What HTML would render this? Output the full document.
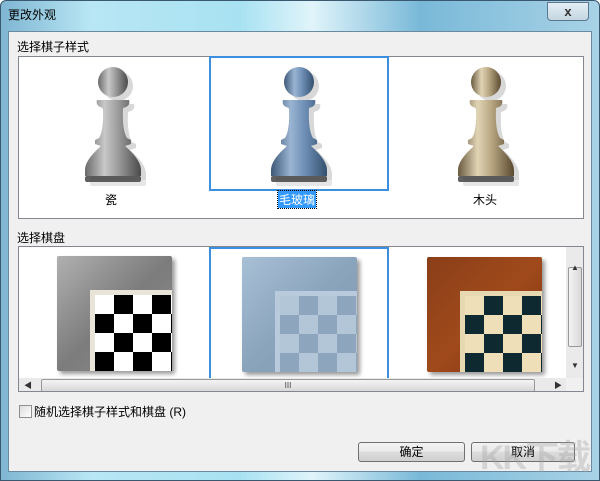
<!DOCTYPE html><html><head><meta charset="utf-8"><style>
*{margin:0;padding:0;box-sizing:border-box}
body{width:600px;height:481px;overflow:hidden;background:#fff;font-family:"Liberation Sans","Noto Sans CJK SC",sans-serif;font-size:12px;color:#000;position:relative}
.a{position:absolute}
.win{left:0;top:0;width:600px;height:481px;background:linear-gradient(90deg,#7fb6d2 0%,#b8e6f4 15%,#a8e2f2 40%,#e0f4fa 52%,#79b9d8 70%,#a8d2e6 100%);border:1px solid #3a5870;border-radius:6px 6px 0 0}
.client{left:8px;top:31px;width:584px;height:441px;background:#f0f0f0;border:1px solid #6a8aa0}
.box{background:#fff;border:1px solid #828790}
.sel{border:2px solid #3c8fe0}
.btn{border:1px solid #707070;border-radius:3px;background:linear-gradient(#f2f2f2,#ebebeb 45%,#dddddd 50%,#cfcfcf);text-align:center;line-height:18px;height:20px}
</style></head><body>
<div class="a win"></div>
<div class="a" style="left:8px;top:6px;font-size:12px">更改外观</div>
<div class="a" style="left:547px;top:2px;width:42px;height:19px;border:1px solid #5a7890;border-radius:0 0 4px 4px;background:linear-gradient(#e4eef4,#c4d6e2);text-align:center;line-height:17px;color:#333;font-weight:bold;font-size:13px">x</div>
<div class="a client"></div>
<div class="a" style="left:17px;top:38px">选择棋子样式</div>
<div class="a box" style="left:18px;top:56px;width:566px;height:163px"></div>
<div class="a sel" style="left:209px;top:56px;width:180px;height:135px"></div>
<svg class="a" style="left:0;top:0" width="600" height="481">
<defs>
<linearGradient id="gp" x1="0" x2="1"><stop offset="0" stop-color="#6a6a6a"/><stop offset=".35" stop-color="#c8c8c8"/><stop offset=".6" stop-color="#9a9a9a"/><stop offset="1" stop-color="#4a4a4a"/></linearGradient>
<linearGradient id="bp" x1="0" x2="1"><stop offset="0" stop-color="#3e5878"/><stop offset=".35" stop-color="#9ab4d2"/><stop offset=".6" stop-color="#6f8fb6"/><stop offset="1" stop-color="#34506e"/></linearGradient>
<linearGradient id="wp" x1="0" x2="1"><stop offset="0" stop-color="#6a5a40"/><stop offset=".35" stop-color="#e0d4b4"/><stop offset=".6" stop-color="#b8a682"/><stop offset="1" stop-color="#5a4a30"/></linearGradient>
<g id="pawn">
<path d="M-16,40 L16,40 Q18,46 10,48 Q9,70 14,78 L18,80 L18,84 L12,86 Q28,100 28,110 L28,116 L-28,116 L-28,110 Q-28,100 -12,86 L-18,84 L-18,80 L-14,78 Q-9,70 -10,48 Q-18,46 -16,40 Z"/>
<circle cx="0" cy="22" r="15"/>
<rect x="-28" y="116" width="56" height="6" rx="2" opacity=".85" fill="#444"/>
</g>
</defs>
<g fill="#000" opacity=".15"><use href="#pawn" x="118" y="64"/><use href="#pawn" x="304" y="64"/><use href="#pawn" x="491" y="64"/></g>
<use href="#pawn" x="113" y="60" fill="url(#gp)"/>
<use href="#pawn" x="299" y="60" fill="url(#bp)"/>
<use href="#pawn" x="486" y="60" fill="url(#wp)"/>
</svg>
<div class="a" style="left:105px;top:191px">瓷</div>
<div class="a" style="left:278px;top:191px;background:#3399ff;color:#fff;padding:0 1px;outline:1px dotted #000">毛玻璃</div>
<div class="a" style="left:473px;top:191px">木头</div>

<div class="a" style="left:17px;top:229px">选择棋盘</div>
<div class="a box" style="left:18px;top:246px;width:566px;height:146px;overflow:hidden">
 <div class="a sel" style="left:190px;top:0;width:180px;height:140px"></div>
 <div class="a" style="left:38px;top:9px;width:115px;height:115px;background:linear-gradient(135deg,#b0b0b0,#7c7c7c 50%,#8e8e8e);box-shadow:3px 3px 4px rgba(0,0,0,.4);border-radius:2px">
  <div class="a" style="left:33px;top:34px;width:82px;height:81px;background:#e8e4d8"></div>
  <div class="a" style="left:38px;top:39px;width:77px;height:76px;background:repeating-conic-gradient(#000 0 25%,#fff 0 50%) 0 0/38px 38px"></div>
 </div>
 <div class="a" style="left:223px;top:10px;width:115px;height:115px;background:linear-gradient(135deg,#a8c0d6,#8aa4bc 50%,#7e98b2);box-shadow:3px 3px 4px rgba(0,0,0,.4);border-radius:2px">
  <div class="a" style="left:33px;top:34px;width:82px;height:81px;background:#b8cadc"></div>
  <div class="a" style="left:38px;top:39px;width:77px;height:76px;background:repeating-conic-gradient(#8ea6bd 0 25%,#b2c6d8 0 50%) 0 0/38px 38px"></div>
 </div>
 <div class="a" style="left:408px;top:10px;width:115px;height:115px;background:linear-gradient(135deg,#8a3e18,#a04a1c 50%,#7a3210);box-shadow:3px 3px 4px rgba(0,0,0,.4);border-radius:2px">
  <div class="a" style="left:33px;top:34px;width:82px;height:81px;background:#e6d8b0"></div>
  <div class="a" style="left:38px;top:39px;width:77px;height:76px;background:repeating-conic-gradient(#0e2a30 0 25%,#eedfb8 0 50%) 0 0/38px 38px"></div>
 </div>
 <div class="a" style="left:547px;top:0;width:17px;height:131px;background:#eaeaea"></div>
 <div class="a" style="left:549px;top:20px;width:14px;height:80px;border:1px solid #999;border-radius:2px;background:linear-gradient(90deg,#f4f4f4,#d8d8d8)"></div>
 <div class="a" style="left:552px;top:16px;font-size:8px;color:#333">▲</div>
 <div class="a" style="left:552px;top:114px;font-size:8px;color:#333">▼</div>
 <div class="a" style="left:0;top:131px;width:547px;height:15px;background:#eaeaea"></div>
 <div class="a" style="left:22px;top:132px;width:494px;height:13px;border:1px solid #999;border-radius:2px;background:linear-gradient(#f4f4f4,#d8d8d8);text-align:center;font-size:8px;line-height:11px;color:#444">III</div>
 <div class="a" style="left:5px;top:133px;font-size:8px;color:#333">◀</div>
 <div class="a" style="left:535px;top:133px;font-size:8px;color:#333">▶</div>
 <div class="a" style="left:547px;top:131px;width:17px;height:15px;background:#f0f0f0"></div>
</div>

<div class="a" style="left:19px;top:405px;width:13px;height:13px;border:1px solid #8e8f8f;background:linear-gradient(135deg,#dcdcdc,#fff)"></div>
<div class="a" style="left:34px;top:403px">随机选择棋子样式和棋盘 (R)</div>
<div class="a btn" style="left:358px;top:442px;width:107px">确定</div>
<div class="a btn" style="left:471px;top:442px;width:104px">取消</div>
<div class="a" style="left:480px;top:430px;font-size:34px;font-weight:bold;color:rgba(160,160,160,.35);letter-spacing:-2px">KK下载</div>
</body></html>
